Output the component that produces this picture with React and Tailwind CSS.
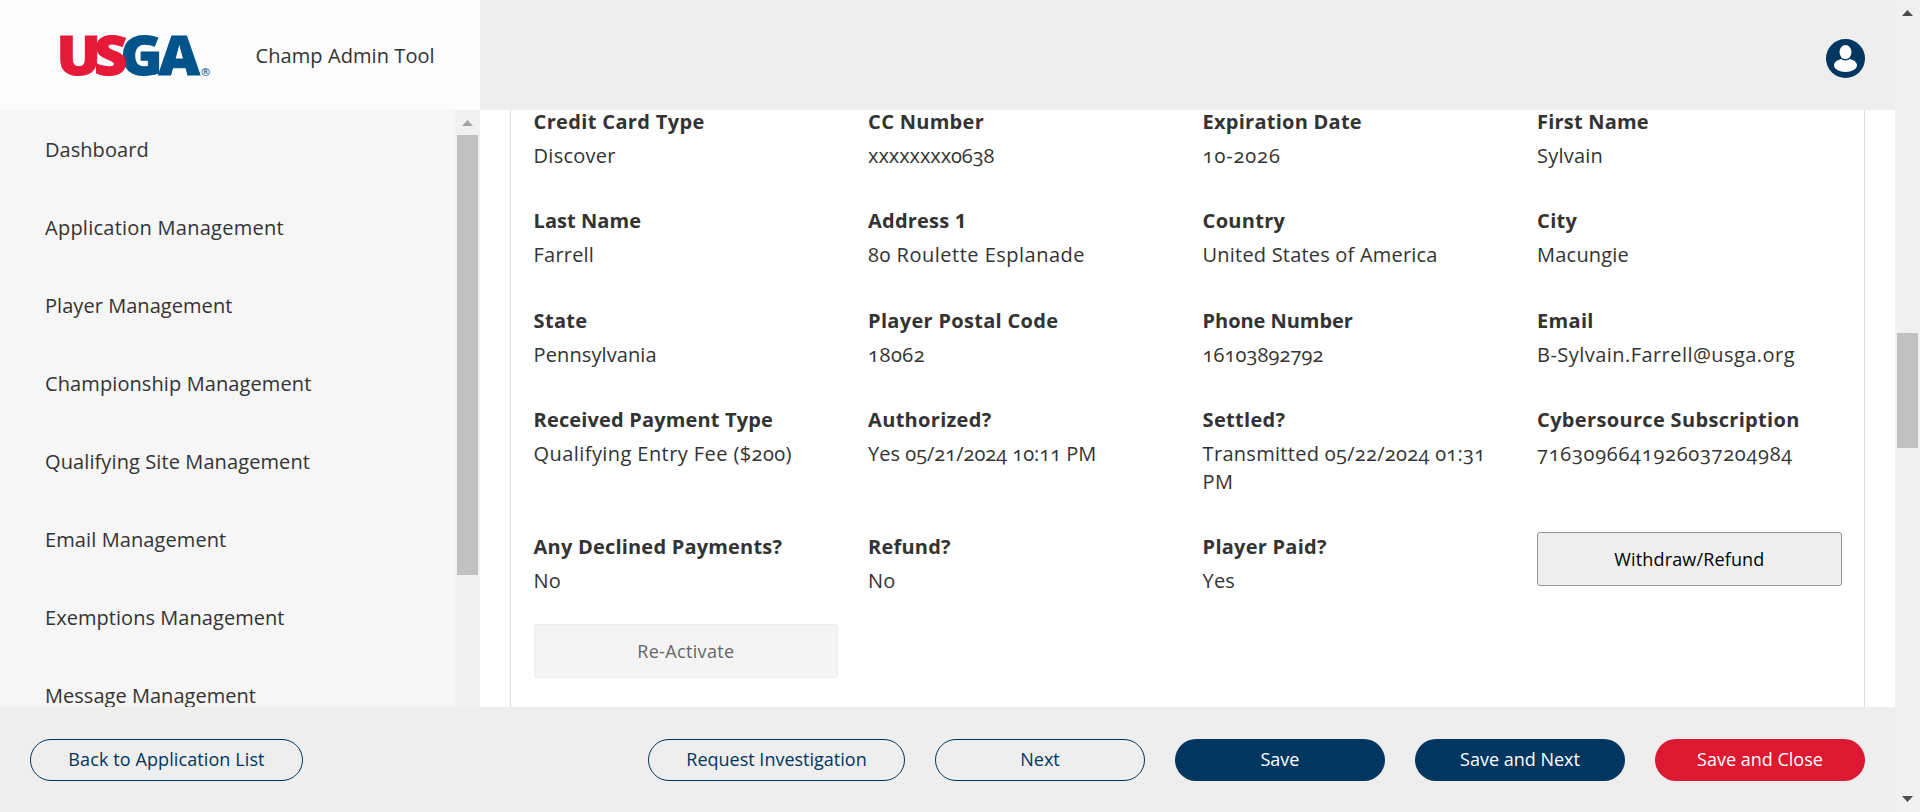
const navItems = [
  ["Dashboard", "tracking-[0.05px]"],
  ["Application Management", "tracking-[0.25px]"],
  ["Player Management", "tracking-[0.05px]"],
  ["Championship Management", "tracking-[0.1px]"],
  ["Qualifying Site Management", "tracking-[0.1px]"],
  ["Email Management", "tracking-[0.1px]"],
  ["Exemptions Management", "tracking-[0.05px]"],
  ["Message Management", "tracking-[0.03px]"],
];

const fields = [
  { label: "Credit Card Type", value: "Discover", lt: "tracking-[0.35px]", vt: "tracking-[0.25px]" },
  { label: "CC Number", value: "xxxxxxxx0638", lt: "tracking-[0.3px]", vt: "tracking-[-0.1px]" },
  { label: "Expiration Date", value: "10-2026", lt: "tracking-[0.25px]", vt: "tracking-[0.9px]" },
  { label: "First Name", value: "Sylvain", lt: "tracking-[0.2px]", vt: "tracking-[0.2px]" },
  { label: "Last Name", value: "Farrell", lt: "tracking-[0.05px]", vt: "tracking-[0.2px]" },
  { label: "Address 1", value: "80 Roulette Esplanade", lt: "tracking-[0.2px]", vt: "tracking-[0.5px]" },
  { label: "Country", value: "United States of America", lt: "tracking-[0.3px]", vt: "tracking-[0.2px]" },
  { label: "City", value: "Macungie", lt: "tracking-[0.3px]", vt: "tracking-[0.2px]" },
  { label: "State", value: "Pennsylvania", lt: "tracking-[0.3px]", vt: "tracking-[0.1px]" },
  { label: "Player Postal Code", value: "18062", lt: "tracking-[0.3px]", vt: "tracking-[0.5px]" },
  { label: "Phone Number", value: "16103892792", lt: "tracking-[-0.05px]", vt: "tracking-[0.1px]" },
  { label: "Email", value: "B-Sylvain.Farrell@usga.org", lt: "tracking-[0.3px]", vt: "tracking-[0.45px]" },
  { label: "Received Payment Type", value: "Qualifying Entry Fee ($200)", lt: "tracking-[0.15px]", vt: "tracking-[0.42px]" },
  { label: "Authorized?", value: "Yes 05/21/2024 10:11 PM", lt: "tracking-[0.3px]", vt: "tracking-[0px]" },
  { label: "Settled?", value: "Transmitted 05/22/2024 01:31 PM", lt: "tracking-[0.3px]", vt: "tracking-[0.3px]" },
  { label: "Cybersource Subscription", value: "7163096641926037204984", lt: "tracking-[0.33px]", vt: "tracking-[0.73px]" },
  { label: "Any Declined Payments?", value: "No", lt: "tracking-[0.2px]", vt: "tracking-[0.2px]" },
  { label: "Refund?", value: "No", lt: "tracking-[0.2px]", vt: "tracking-[0.2px]" },
  { label: "Player Paid?", value: "Yes", lt: "tracking-[0.25px]", vt: "tracking-[0.1px]" },
];

function Logo() {
  return (
    <svg
      className="h-[50px] w-[154px] shrink-0 overflow-visible font-['Open_Sans',sans-serif] font-extrabold"
      viewBox="0 0 154 50"
      fontSize="55"
      strokeWidth="1"
      role="img"
      aria-label="USGA"
    >
      <text x="-3.5" y="45" textLength="44.5" lengthAdjust="spacingAndGlyphs" fill="#e61938" stroke="#e61938">U</text>
      <text x="60.5" y="45" textLength="42" lengthAdjust="spacingAndGlyphs" fill="#00548b" stroke="#00548b">G</text>
      <text x="34" y="45" textLength="33.5" lengthAdjust="spacingAndGlyphs" fill="#e61938" stroke="#e61938">S</text>
      <text x="98.5" y="45" textLength="41.5" lengthAdjust="spacingAndGlyphs" fill="#00548b" stroke="#00548b">A</text>
      <text x="141" y="46" fontSize="11" fontWeight="600" strokeWidth="0" fill="#00548b">®</text>
    </svg>
  );
}

function Avatar() {
  return (
    <svg className="h-[39px] w-[39px]" viewBox="0 0 39 39" aria-hidden="true">
      <circle cx="19.5" cy="19.5" r="19.5" fill="#00365f" />
      <ellipse cx="19.5" cy="26.3" rx="11.5" ry="6.7" fill="#fff" />
      <ellipse cx="19.5" cy="13" rx="7.3" ry="8.6" fill="#00365f" />
      <rect x="13.6" y="6" width="11.8" height="14.2" rx="5.9" ry="6.6" fill="#fff" />
    </svg>
  );
}

function Arrow({ down, className = "" }) {
  return (
    <svg className={"h-[6px] w-[11px] " + className} viewBox="0 0 11 6" aria-hidden="true">
      <path d={down ? "M0 0H11L5.5 6Z" : "M0 6H11L5.5 0Z"} fill="currentColor" />
    </svg>
  );
}

function Field({ label, value, lt, vt }) {
  return (
    <div className="flex flex-col gap-1.5">
      <div className={"font-bold " + lt}>{label}</div>
      <div className={"[font-variant-numeric:oldstyle-nums] " + vt}>{value}</div>
    </div>
  );
}

const pill = "h-[42px] rounded-full pb-0.5 text-lg leading-none whitespace-nowrap";
const outline = pill + " border border-[#00365f] text-[#00365f]";
const solid = pill + " w-[210px] font-medium text-white";

export default function App() {
  return (
    <div className="flex h-[812px] w-full overflow-hidden bg-white font-['Open_Sans',sans-serif] text-xl leading-7 text-[#333]">
      <div className="flex min-w-0 flex-1 flex-col">
        <header className="flex h-[110px] shrink-0 bg-[#eee]">
          <div className="flex w-[480px] items-center bg-[#fcfcfc] pl-[60px]">
            <Logo />
            <span className="ml-[41.5px] pt-0.5 tracking-[0.08px] whitespace-nowrap">Champ Admin Tool</span>
          </div>
          <div className="flex flex-1 items-center justify-end pt-[7px] pr-[30px]">
            <Avatar />
          </div>
        </header>

        <div className="flex min-h-0 flex-1">
          <aside className="flex w-[480px] shrink-0 overflow-hidden bg-[#f6f6f6]">
            <nav className="flex-1">
              {navItems.map(([name, tracking]) => (
                <a key={name} className={"flex h-[78px] items-center pt-0.5 pl-[45px] whitespace-nowrap " + tracking}>
                  {name}
                </a>
              ))}
            </nav>
            <div className="flex w-[25px] flex-col items-center bg-[#f1f1f1]">
              <div className="flex h-[25px] pt-2.5">
                <Arrow className="text-[#a3a3a3]" />
              </div>
              <div className="h-[440px] w-[21px] bg-[#c1c1c1]" />
            </div>
          </aside>

          <main className="min-w-0 flex-1 overflow-hidden pr-[30px] pl-[30px]">
            <section className="flow-root h-full border-x border-[#ddd] pr-[22px] pl-[22.6px]">
              <div className="-mt-[1.75px] grid grid-cols-[repeat(4,304.5px)] gap-x-[30px] gap-y-[37.2px]">
                {fields.map((f) => (
                  <Field key={f.label} {...f} />
                ))}
                <button className="-mt-px h-[54px] rounded-[3px] border border-[#949494] bg-[#efefef] text-lg font-medium tracking-[0.15px] text-black">
                  Withdraw/Refund
                </button>
              </div>
              <button
                disabled
                className="mt-[29px] h-[54px] w-[304.5px] rounded-[3px] border border-[#ececec] bg-[#f4f4f4] text-lg tracking-[0.35px] text-[#666]"
              >
                Re-Activate
              </button>
            </section>
          </main>
        </div>

        <footer className="flex h-[105px] shrink-0 gap-[30px] bg-[#eee] pt-8 pr-[30px] pl-[30px]">
          <button className={outline + " mr-auto w-[273px] tracking-[0.1px]"}>Back to Application List</button>
          <button className={outline + " w-[257px]"}>Request Investigation</button>
          <button className={outline + " w-[210px]"}>Next</button>
          <button className={solid + " bg-[#00365f]"}>Save</button>
          <button className={solid + " bg-[#00365f]"}>Save and Next</button>
          <button className={solid + " bg-[#dc1931]"}>Save and Close</button>
        </footer>
      </div>

      <div className="flex w-[25px] shrink-0 flex-col items-center justify-between bg-[#f0f0f0] py-2.5 text-[#4d4d4d]">
        <Arrow />
        <div className="mb-[31px] h-[115px] w-[21px] bg-[#c1c1c1]" />
        <Arrow down />
      </div>
    </div>
  );
}
